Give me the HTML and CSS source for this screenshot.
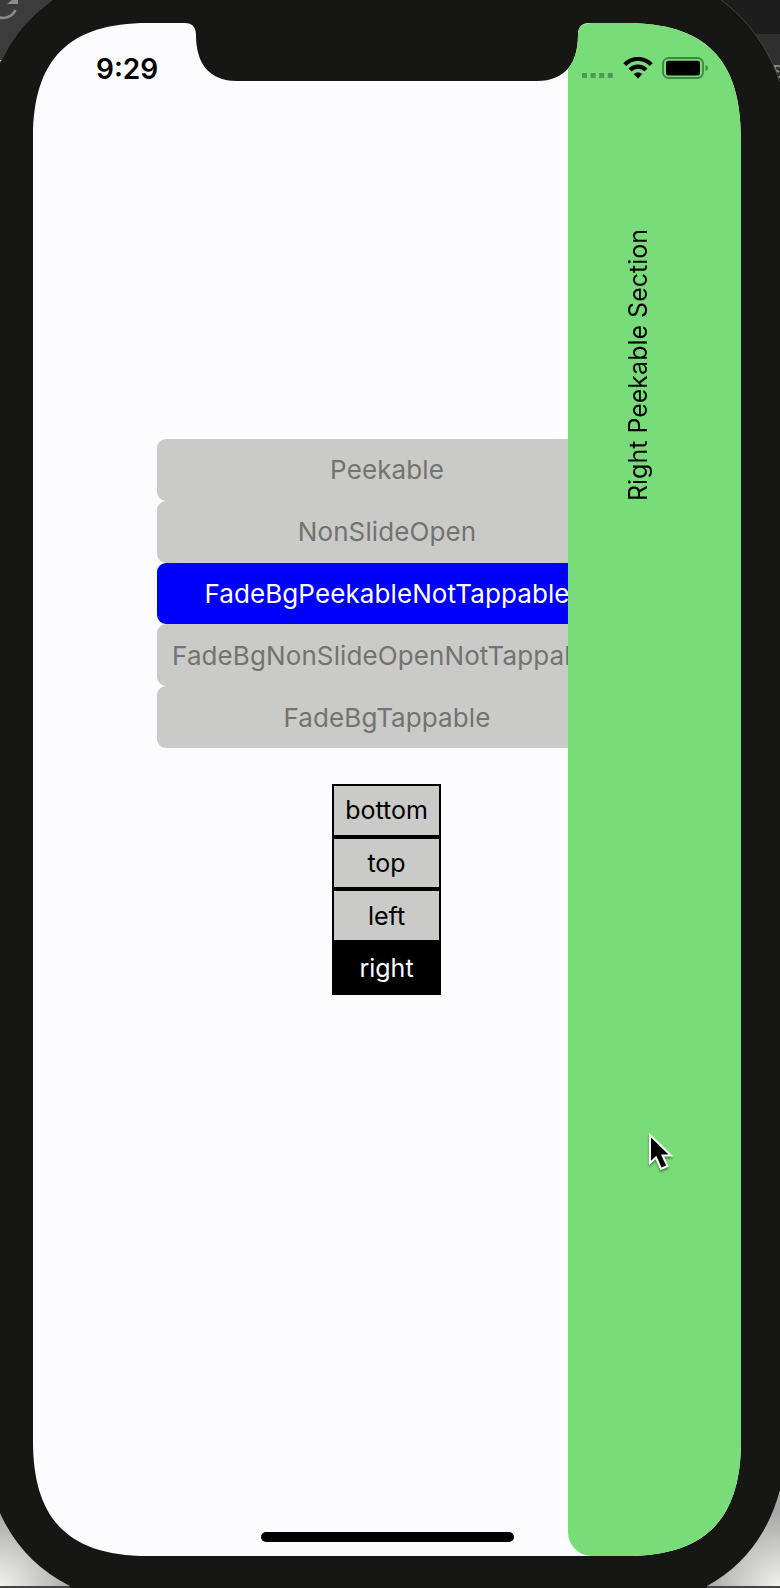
FILE: index.html
```html
<!DOCTYPE html>
<html lang="en">
<head>
<meta charset="utf-8">
<title>Peekable sections</title>
<link rel="stylesheet" href="styles.css">
</head>
<body>
<div class="desktop">
  <svg class="device" width="780" height="1588" viewBox="0 0 780 1588" aria-hidden="true">
    <defs>
      <radialGradient id="glowLeft" gradientUnits="userSpaceOnUse" cx="0" cy="1588" r="75"><stop offset="0" stop-color="#f2f2ee"/><stop offset="1" stop-color="#a9a9a9"/></radialGradient>
      <radialGradient id="glowRight" gradientUnits="userSpaceOnUse" cx="780" cy="1588" r="75"><stop offset="0" stop-color="#f2f2ee"/><stop offset="1" stop-color="#a9a9a9"/></radialGradient>
    </defs>
    <rect width="100" height="61" fill="#3c3c3c"/>
    <path d="M15.500 10A14 14 0 0 1-2 17" fill="none" stroke="#8c8c8c" stroke-width="2.500"/>
    <path d="M7 4L18 -5V4Z" fill="#8c8c8c"/>
    <rect y="60" width="5" height="2" fill="#ddd"/>
    <rect x="700" width="80" height="34" fill="#1d1d1d"/>
    <rect x="700" y="34" width="80" height="60" fill="#303030"/>
    <path d="M774 66h6M775 66v4l4 2M776 77h4" fill="none" stroke="#999" stroke-width="1.500"/>
    <rect y="1490" width="100" height="98" fill="url(#glowLeft)"/>
    <rect x="680" y="1480" width="100" height="108" fill="url(#glowRight)"/>
    <rect y="1586" width="780" height="2" fill="#444"/>
    <path d="M0 63Q16 26 52 0H721Q762 30 780 82V1490Q762 1556 707 1586V1588H70V1586Q22 1562 0 1513Z" fill="#161614"/>
    <path d="M0 63Q16 26 52 0M721 0Q762 30 780 82" fill="none" stroke="#45453c"/>
  </svg>
  <main class="screen">
    <div class="status">
      <span class="time">9:29</span>
      <div class="indicators">
        <svg width="32" height="22" viewBox="0 0 32 22"><path d="M0 16h5v5H0zM8.600 16h5v5h-5zM17.200 16h5v5h-5zM25.800 16h5v5h-5z" fill="#50984f"/></svg>
        <svg class="wifi" width="30" height="22" viewBox="0 0 30 22"><path d="M1.800 7.600A18.300 18.300 0 0 1 28.200 7.600M7 13A11 11 0 0 1 23 13" fill="none" stroke="#000" stroke-width="4.200"/><path d="M10.700 17.100Q15 13.400 19.300 17.100L15 21.500Z"/></svg>
        <svg class="battery" width="47" height="22" viewBox="0 0 47 22"><rect x="1" y="1" width="40" height="20" rx="5.500" fill="none" stroke="#3e8740" stroke-width="1.800"/><rect x="4" y="3.700" width="34" height="14.800" rx="2.500"/><path d="M43.500 8Q46 8.500 46 11T43.500 14Z" fill="#3e8740"/></svg>
      </div>
    </div>
    <div class="modes">
      <div class="mode"><span>Peekable</span></div>
      <div class="mode"><span>NonSlideOpen</span></div>
      <div class="mode active"><span>FadeBgPeekableNotTappable</span></div>
      <div class="mode"><span>FadeBgNonSlideOpenNotTappable</span></div>
      <div class="mode"><span>FadeBgTappable</span></div>
    </div>
    <div class="sides">
      <div class="side">bottom</div>
      <div class="side">top</div>
      <div class="side">left</div>
      <div class="side chosen">right</div>
    </div>
    <div class="home"></div>
    <aside class="panel"><span class="panel-label">Right Peekable Section</span></aside>
  </main>
  <svg class="cursor" width="30" height="44" viewBox="0 0 30 44" aria-hidden="true"><path d="M3 2V30L9 24.500L14 36L20.500 33L15.500 22.500H24Z" fill="#000" stroke="#fff" stroke-width="2"/></svg>
</div>
</body>
</html>
```
FILE: styles.css
```css
* { box-sizing: border-box; }
body { margin: 0; font-family: Inter, "Liberation Sans", sans-serif; }
.desktop {
  position: relative;
  width: 780px;
  height: 1588px;
  padding: 23px 39px 32px 33px;
  overflow: hidden;
  background: #161614;
}
.device { position: absolute; inset: 0; }
.screen {
  position: relative;
  display: flex;
  flex-direction: column;
  align-items: center;
  width: 708px;
  height: 1533px;
  padding-bottom: 14px;
  background: #fcfcff;
  clip-path: path("M0 115C0 36 36 0 115 0H152C159 0 163 4 163 12C163 39 175 58 204 58H504C533 58 545 39 545 12C545 4 549 0 556 0H593C672 0 708 36 708 115V1418C708 1497 672 1533 593 1533H115C36 1533 0 1497 0 1418Z");
}
.status {
  position: relative;
  z-index: 2;
  display: flex;
  justify-content: space-between;
  align-items: flex-start;
  width: 100%;
  height: 416px;
  padding: 29px 32px 0 63px;
}
.time { font-size: 28px; line-height: 34px; font-weight: 600; }
.indicators { display: flex; padding-top: 5px; }
.wifi { margin-left: 9px; }
.battery { margin-left: 9px; }
.modes { width: 460px; font-size: 26px; letter-spacing: 0.1px; }
.mode {
  display: flex;
  align-items: center;
  justify-content: center;
  height: 61.8px;
  border-radius: 9px;
  background: #cacac8;
  color: #73736f;
  white-space: nowrap;
}
.mode.active { background: #0000fd; color: #fff; }
.sides { width: 109px; margin: 36px 1px 0 0; font-size: 25px; }
.side {
  display: flex;
  align-items: center;
  justify-content: center;
  height: 52.700px;
  border: 2px solid #000;
  background: #cacac8;
  color: #000;
}
.side.chosen { background: #000; color: #fff; }
.home { width: 253px; height: 10px; margin-top: auto; border-radius: 5px; background: #000; }
.panel {
  position: absolute;
  top: 0;
  right: 0;
  bottom: 0;
  display: flex;
  width: 173px;
  padding: 206px 0 0 54px;
  border-radius: 24px 0 0 24px;
  background: #78dd78;
}
.panel-label {
  align-self: flex-start;
  writing-mode: vertical-rl;
  transform: rotate(180deg);
  font-size: 25px;
  line-height: 32px;
  white-space: nowrap;
}
.cursor { position: absolute; left: 647px; top: 1133px; filter: drop-shadow(0 2px 1px #0006); }
```
